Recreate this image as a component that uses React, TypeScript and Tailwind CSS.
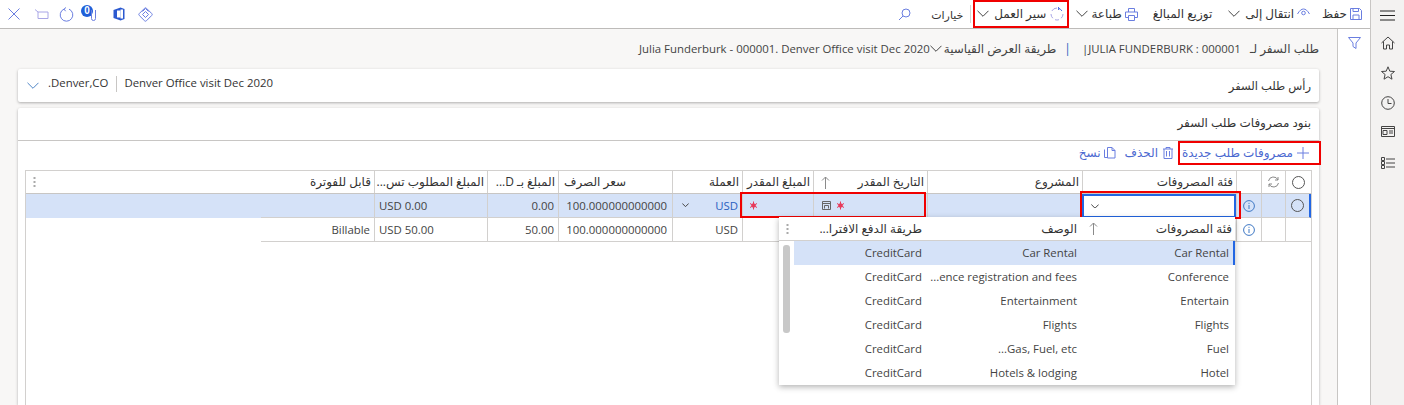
import React from 'react';

const ic = 'stroke-[#6a7ee0] fill-none shrink-0';

function Chevron({ className = 'stroke-[#444]', w = 12 }: { className?: string; w?: number }) {
  return (
    <svg width={w} height={w * 0.6} viewBox="0 0 12 7.2" className={`${className} shrink-0`} fill="none" strokeWidth={12 / w}>
      <path d="M0.500 0.800 6 6.300 11.500 0.800" />
    </svg>
  );
}

function L({ children, className = '' }: { children: React.ReactNode; className?: string }) {
  return <span dir="ltr" className={`text-[11.4px] whitespace-nowrap ${className}`}>{children}</span>;
}

function Kebab() {
  return (
    <svg width="3" height="10" viewBox="0 0 3 10" className="fill-[#aaa]">
      <rect x="0.500" y="0" width="2" height="2" />
      <rect x="0.500" y="4" width="2" height="2" />
      <rect x="0.500" y="8" width="2" height="2" />
    </svg>
  );
}

function Radio() {
  return <span className="block w-[13px] h-[13px] rounded-full border border-[#555]" />;
}

function InfoIcon() {
  return (
    <svg width="12" height="12" viewBox="0 0 12 12" fill="none" className="stroke-[#3f78c4]">
      <circle cx="6" cy="6" r="5.400" />
      <path d="M6 5v4M6 2.800v1.100" />
    </svg>
  );
}

function Required() {
  return (
    <svg width="9" height="9" viewBox="0 0 9 9" fill="none" className="stroke-[#e8395a] shrink-0">
      <path d="M4.500 0.500v8M1 2.500l7 4M8 2.500l-7 4" />
      <circle cx="4.500" cy="4.500" r="1.800" className="fill-[#e8395a]" />
    </svg>
  );
}

function UpArrow() {
  return (
    <svg width="9" height="13" viewBox="0 0 9 13" fill="none" className="stroke-[#8a8a8a]">
      <path d="M4.500 13V1M1 4.500 4.500 1 8 4.500" />
    </svg>
  );
}

function LeftIcons() {
  return (
    <div dir="ltr" className="flex items-center h-[28px] pl-[8px]">
      <svg width="12" height="12" viewBox="0 0 12 12" className={ic}><path d="M0.500 0.500l11 11M11.500 0.500 0.500 11.500" /></svg>
      <svg width="15" height="10" viewBox="0 0 15 10" className={`${ic} ml-[14px]`}><path d="M1 0.500 4 3h10v6.500H4V3" className="stroke-[#a9a6e6]" /></svg>
      <svg width="15" height="15" viewBox="0 0 15 15" className={`${ic} ml-[10px]`}><path d="M10 2.100A6.300 6.300 0 1 1 5 2.100M5 2.100 7 0.500M5 2.100 6.600 4.200" /></svg>
      <div className="relative w-[18px] h-[20px] ml-[7px] mt-[1px]">
        <span className="absolute left-0 top-0 w-[12px] h-[12px] rounded-full bg-[#1f5fd8] text-white text-[10px] leading-[12px] text-center font-bold font-['Liberation_Sans']">0</span>
        <svg width="7" height="13" viewBox="0 0 7 13" className={`${ic} absolute left-[9px] top-[4px]`}><path d="M1.500 1v8.500a2 2 0 0 0 4 0V1" /></svg>
      </div>
      <svg width="12" height="14" viewBox="0 0 12 14" className="ml-[14px] shrink-0">
        <path d="M0.500 3 7.500 0.500 11.500 2v10l-4 1.500L0.500 11z" className="fill-[#2b59d0]" />
        <path d="M4 3.500h3.500v7H4z" className="fill-white" />
        <path d="M7.500 2.500h2.500v9H7.500z" className="fill-white" />
      </svg>
      <svg width="15" height="15" viewBox="0 0 15 15" className={`${ic} ml-[13px]`}>
        <path d="M6.500 1.300a1.400 1.400 0 0 1 2 0l5.200 5.200a1.400 1.400 0 0 1 0 2l-5.200 5.200a1.400 1.400 0 0 1-2 0L1.300 8.500a1.400 1.400 0 0 1 0-2zM7.500 4.500l3 3-3 3-3-3zM4.500 4.500 7.500 1.500M10.500 4.500 7.500 1.500" />
      </svg>
    </div>
  );
}

function TopBar() {
  return (
    <div className="flex items-center h-[29px] border-b border-[#bdbbb9] bg-white shrink-0">
      <div className="flex items-center mr-[8px]">
        <svg width="12" height="12" viewBox="0 0 12 12" className={`${ic} ml-[3px]`}>
          <path d="M0.500 0.500h9l2 2v9h-11zM3 0.500v3h5.500v-3M3 11.500V7h6v4.500" />
        </svg>
        <span className="whitespace-nowrap">حفظ</span>
      </div>
      <div className="flex items-center mr-[12px]">
        <svg width="13" height="9" viewBox="0 0 13 9" className={`${ic} ml-[3px] mb-[4px]`}>
          <path d="M0.500 6C2.500 2.500 4.500 1 6.500 1S10.500 2.500 12.500 6" />
          <circle cx="6.500" cy="5" r="1.800" />
        </svg>
        <span className="whitespace-nowrap">انتقال إلى</span>
        <span className="mr-[5px]"><Chevron /></span>
      </div>
      <span className="mr-[16px] whitespace-nowrap">توزيع المبالغ</span>
      <div className="flex items-center mr-[15px]">
        <svg width="13" height="13" viewBox="0 0 13 13" className={`${ic} ml-[3px]`}>
          <path d="M3.500 4V0.500h6V4M0.500 4h12v5.500h-3M3.500 9.500h-3V4M3.500 7.500h6v5h-6z" />
        </svg>
        <span className="whitespace-nowrap">طباعة</span>
        <span className="mr-[3px]"><Chevron /></span>
      </div>
      <div className="flex items-center h-[28px] w-[96px] mr-[7px] pr-[3px] border-2 border-[#f00000]">
        <svg width="14" height="14" viewBox="0 0 14 14" fill="none" className="ml-[4px] shrink-0">
          <path d="M7 1A6 6 0 0 0 1.800 4M1 7a6 6 0 0 0 1.800 4.200M5 12.700a6 6 0 0 0 4 0M11.200 11.200A6 6 0 0 0 13 7" className="stroke-[#a9a6e6]" />
          <path d="M8 1.200A6 6 0 0 1 12 4M8 0l1.500 1.500L8 3" className="stroke-[#4f6fe0]" />
        </svg>
        <span className="whitespace-nowrap">سير العمل</span>
        <span className="mr-[5px]"><Chevron /></span>
      </div>
      <span className="w-px h-[18px] bg-[#d8d6d4] mr-[2px] shrink-0" />
      <span className="mr-[7px] whitespace-nowrap text-[11px]">خيارات</span>
      <svg width="13" height="13" viewBox="0 0 13 13" className={`${ic} mr-[20px]`}>
        <circle cx="8" cy="5" r="4" />
        <path d="M5 8 1 12" />
      </svg>
      <div className="mr-auto">
        <LeftIcons />
      </div>
    </div>
  );
}

function NavRail() {
  return (
    <div className="flex flex-col items-center w-[34px] shrink-0 bg-[#f3f2f1] border-l border-[#c8c6c4]">
      <svg width="15" height="11" viewBox="0 0 15 11" className="stroke-[#222] mt-[10px]" fill="none"><path d="M0 1h15M0 5.500h15M0 10h15" /></svg>
      <svg width="14" height="14" viewBox="0 0 14 14" className="stroke-[#444] mt-[15px]" fill="none"><path d="M0.500 7 7 1l6.500 6M2.500 5.500V13H5.500V9h3v4h3V5.500" /></svg>
      <svg width="14" height="14" viewBox="0 0 14 14" className="stroke-[#444] mt-[16px]" fill="none"><path d="M7 0.800 8.800 5.200 13.500 5.500 9.900 8.500 11 13.200 7 10.700 3 13.200 4.100 8.500 0.500 5.500 5.200 5.200z" /></svg>
      <svg width="14" height="14" viewBox="0 0 14 14" className="stroke-[#444] mt-[16px]" fill="none"><circle cx="7" cy="7" r="6.300" /><path d="M7 3v4.500h3.500" /></svg>
      <svg width="14" height="11" viewBox="0 0 14 11" className="stroke-[#444] mt-[16px]" fill="none"><path d="M0.500 0.500h13v10H0.500zM0.500 2.500h13M2 4.500h4v4H2zM8 5h4M8 7h4" /></svg>
      <svg width="14" height="12" viewBox="0 0 14 12" className="stroke-[#444] mt-[20px]" fill="none"><path d="M0.500 0.500h3v3h-3zM0.500 4.500h3v3h-3zM0.500 8.500h3v3h-3zM5 2h9M5 6h9M5 10h9" /></svg>
    </div>
  );
}

function HeadCell({ w, label, arrow, className = '' }: { w: string; label?: string; arrow?: boolean; className?: string }) {
  return (
    <div className={`${w} shrink-0 h-full flex items-center justify-between px-[3px] border-l border-[#d2d0ce] overflow-hidden whitespace-nowrap text-[#333] ${className}`}>
      <span>{label}</span>
      {arrow && <span className="ml-[4px]"><UpArrow /></span>}
    </div>
  );
}

function Cell({ w, children, className = '' }: { w: string; children?: React.ReactNode; className?: string }) {
  return (
    <div className={`${w} shrink-0 h-full flex items-center px-[4px] border-l border-[#d2d0ce] whitespace-nowrap overflow-hidden text-[#444] ${className}`}>
      {children}
    </div>
  );
}

function ExpenseGrid() {
  const rowLine = 'border-b border-b-[#d2d0ce]';
  return (
    <div className="relative mx-[7px] mt-[5px] flex-1 border-x border-t border-[#d2d0ce]">
      <div className="flex h-[23px] border-b border-[#c8c6c4]">
        <Cell w="w-[26px]" className="justify-center px-0"><Radio /></Cell>
        <Cell w="w-[24px]" className="justify-center px-0">
          <svg width="13" height="12" viewBox="0 0 13 12" fill="none" className="stroke-[#888]"><path d="M1.500 5A5 5 0 0 1 11 4M11.500 7A5 5 0 0 1 2 8M11 1v3H8M2 11V8h3" /></svg>
        </Cell>
        <Cell w="w-[25px]" />
        <HeadCell w="w-[154px]" label="فئة المصروفات" />
        <HeadCell w="w-[155px]" label="المشروع" />
        <HeadCell w="w-[114px]" label="التاريخ المقدر" arrow />
        <HeadCell w="w-[71px]" label="المبلغ المقدر" />
        <HeadCell w="w-[70px]" label="العملة" />
        <HeadCell w="w-[114px]" label="سعر الصرف" className="justify-end pl-[5px]" />
        <HeadCell w="w-[71px]" label="المبلغ بـ D..." />
        <HeadCell w="w-[113px]" label="المبلغ المطلوب تس..." />
        <HeadCell w="w-[113px]" label="قابل للفوترة" className="border-l-0" />
        <div className="flex-1 flex items-center justify-end pl-[7px]"><Kebab /></div>
      </div>

      <div className="flex h-[24px] bg-[#d5e2f8]">
        <Cell w="w-[26px]" className={`justify-center px-0 border-r-2 border-r-[#2266e3] ${rowLine}`}><Radio /></Cell>
        <Cell w="w-[24px]" className={rowLine} />
        <Cell w="w-[25px]" className={`justify-center px-0 ${rowLine}`}><InfoIcon /></Cell>
        <div className="w-[154px] shrink-0 h-full flex items-center justify-end pl-[7px] bg-white border-2 border-[#2266e3]">
          <Chevron w={8} />
        </div>
        <Cell w="w-[155px]" className={rowLine} />
        <Cell w="w-[114px]" className={`justify-end gap-[5px] pl-[8px] ${rowLine}`}>
          <Required />
          <svg width="9" height="9" viewBox="0 0 9 9" fill="none" className="stroke-[#666] shrink-0"><path d="M0.500 0.500h8v8h-8zM0.500 2.500h8M2.500 4.500h4M2.500 4.500v3M6.500 4.500v3" /></svg>
        </Cell>
        <Cell w="w-[71px]" className={`justify-end pl-[6px] ${rowLine}`}><Required /></Cell>
        <Cell w="w-[70px]" className={`justify-between ${rowLine}`}>
          <L className="text-[#2a5fc0]">USD</L>
          <span className="ml-[5px]"><Chevron w={7} /></span>
        </Cell>
        <Cell w="w-[114px]" className={`pr-[5px] ${rowLine}`}><L className="text-[11.1px]">100.000000000000</L></Cell>
        <Cell w="w-[71px]" className={rowLine}><L>0.00</L></Cell>
        <Cell w="w-[113px]" className={`justify-end ${rowLine}`}><L>USD 0.00</L></Cell>
        <div className="w-[113px] shrink-0 h-full border-b border-[#d2d0ce]" />
        <div className="flex-1 h-full" />
      </div>

      <div className="flex h-[24px] bg-white">
        <Cell w="w-[26px]" className={rowLine} />
        <Cell w="w-[24px]" className={rowLine} />
        <Cell w="w-[25px]" className={`justify-center px-0 ${rowLine}`}><InfoIcon /></Cell>
        <Cell w="w-[154px]" className={rowLine} />
        <Cell w="w-[155px]" className={rowLine} />
        <Cell w="w-[114px]" className={rowLine} />
        <Cell w="w-[71px]" className={rowLine} />
        <Cell w="w-[70px]" className={rowLine}><L>USD</L></Cell>
        <Cell w="w-[114px]" className={`pr-[5px] ${rowLine}`}><L className="text-[11.1px]">100.000000000000</L></Cell>
        <Cell w="w-[71px]" className={rowLine}><L>50.00</L></Cell>
        <Cell w="w-[113px]" className={`justify-end ${rowLine}`}><L>USD 50.00</L></Cell>
        <Cell w="w-[113px]" className={`border-l-0 ${rowLine}`}><L>Billable</L></Cell>
      </div>

      {/* annotation boxes */}
      <div className="absolute top-[20px] right-[70px] w-[161px] h-[28px] border-2 border-[#f00000]" />
      <div className="absolute top-[21px] right-[385px] w-[186px] h-[26px] border-2 border-[#f00000]" />

      <LookupPopup />
    </div>
  );
}

const lookupRows = [
  ['Car Rental', 'Car Rental'],
  ['Conference', '...ence registration and fees'],
  ['Entertain', 'Entertainment'],
  ['Flights', 'Flights'],
  ['Fuel', '...Gas, Fuel, etc'],
  ['Hotel', 'Hotels & lodging'],
];

function LookupPopup() {
  return (
    <div className="absolute top-[46px] right-[76px] w-[456px] h-[168px] bg-white shadow-[0_2px_6px_rgba(0,0,0,0.3)] text-[#444]">
      <div className="flex items-center h-[24px] border-b border-[#d2d0ce] text-[#333]">
        <div className="w-[153px] shrink-0 flex items-center justify-between pr-[3px] pl-[7px]">
          <span>فئة المصروفات</span>
          <UpArrow />
        </div>
        <div className="w-[157px] shrink-0 pr-[5px]">الوصف</div>
        <div className="flex-1 flex items-center justify-between pr-[3px] pl-[7px] whitespace-nowrap">
          <span>طريقة الدفع الافترا...</span>
          <Kebab />
        </div>
      </div>
      <div className="flex">
        <div className="flex-1">
          {lookupRows.map((r, i) => (
            <div key={r[0]} className={`flex items-center h-[24px] ${i === 0 ? 'bg-[#d5e2f8] border-r-2 border-[#2266e3]' : 'border-r-2 border-transparent'}`}>
              <div className="w-[151px] shrink-0 pr-[4px]"><L>{r[0]}</L></div>
              <div className="w-[157px] shrink-0 pr-[5px]"><L>{r[1]}</L></div>
              <div className="flex-1 pr-[3px]"><L>CreditCard</L></div>
            </div>
          ))}
        </div>
        <div className="w-[15px] shrink-0 flex justify-center pt-[4px]">
          <span className="block w-[7px] h-[88px] rounded-[3px] bg-[#c8c8c8]" />
        </div>
      </div>
    </div>
  );
}

export default function App() {
  return (
    <div dir="rtl" className="flex w-[1404px] h-[405px] overflow-hidden bg-white text-[12px] leading-none font-['Open_Sans','DejaVu_Sans',sans-serif] text-[#333]">
      <NavRail />
      <div className="flex flex-col flex-1 min-w-0">
        <TopBar />
        <div className="flex flex-1 min-h-0">
          <div className="w-[33px] shrink-0 flex justify-center pt-[8px] border-l border-[#c8c6c4] bg-white">
            <svg width="13" height="12" viewBox="0 0 13 12" className={ic}><path d="M0.500 0.500h12L8 6v5.500L5 9.500V6z" /></svg>
          </div>
          <div className="flex flex-col flex-1 min-w-0 bg-[#f8f7f6] px-[18px]">
            {/* breadcrumb */}
            <div className="flex items-center h-[40px] shrink-0 whitespace-nowrap text-[#444]">
              <span>طلب السفر لـ</span>
              <L className="mr-[9px]">|JULIA FUNDERBURK : 000001</L>
              <span className="mr-[11px] text-[#2a5fc0]">|</span>
              <span className="mr-[8px]">طريقة العرض القياسية</span>
              <span className="mr-[2px]"><Chevron /></span>
              <L className="mr-[0px]">Julia Funderburk - 000001. Denver Office visit Dec 2020</L>
            </div>
            {/* header card */}
            <div className="flex items-center justify-between h-[33px] shrink-0 bg-white rounded-[2px] shadow-[0_1px_3px_rgba(0,0,0,0.3)] pr-[8px] pl-[9px]">
              <span className="text-[11.5px]">رأس طلب السفر</span>
              <div className="flex items-center">
                <L className="-translate-y-[3px]">Denver Office visit Dec 2020</L>
                <span className="w-px h-[16px] bg-[#c8c6c4] mr-[7px] -translate-y-[2px]" />
                <L className="mr-[8px] -translate-y-[3px]">.Denver,CO</L>
                <span className="mr-[9px]"><Chevron className="stroke-[#4f86c6]" /></span>
              </div>
            </div>
            {/* lines card */}
            <div className="flex flex-col flex-1 min-h-0 mt-[6px] bg-white rounded-t-[2px] shadow-[0_1px_3px_rgba(0,0,0,0.3)]">
              <div className="flex items-center h-[33px] shrink-0 pr-[8px] pb-[3px] border-b border-[#c8c6c4]">بنود مصروفات طلب السفر</div>
              <div className="flex items-center h-[24px] shrink-0 text-[#4a68d0]">
                <div className="flex items-center h-[24px] w-[143px] border-2 border-[#f00000] pr-[10px] gap-[4px] whitespace-nowrap -mt-[1px] mr-[-2px]">
                  <svg width="12" height="12" viewBox="0 0 12 12" className={ic}><path d="M6 0v12M0 6h12" /></svg>
                  <span>مصروفات طلب جديدة</span>
                </div>
                <div className="flex items-center mr-[5px] gap-[5px]">
                  <svg width="10" height="12" viewBox="0 0 10 12" className={ic}><path d="M0 2h10M3 2V0.500h4V2M1 2v9.500h8V2M3.500 4v5.500M6.500 4v5.500" /></svg>
                  <span>الحذف</span>
                </div>
                <div className="flex items-center mr-[9px] gap-[3px]">
                  <svg width="12" height="13" viewBox="0 0 12 13" className={ic}><path d="M0.500 2.500V10.500H4M3.500 0.500h4.500l3 3v7.500h-7.500zM8 0.500v3h3" /></svg>
                  <span>نسخ</span>
                </div>
              </div>
              <ExpenseGrid />
            </div>
          </div>
        </div>
      </div>
    </div>
  );
}
